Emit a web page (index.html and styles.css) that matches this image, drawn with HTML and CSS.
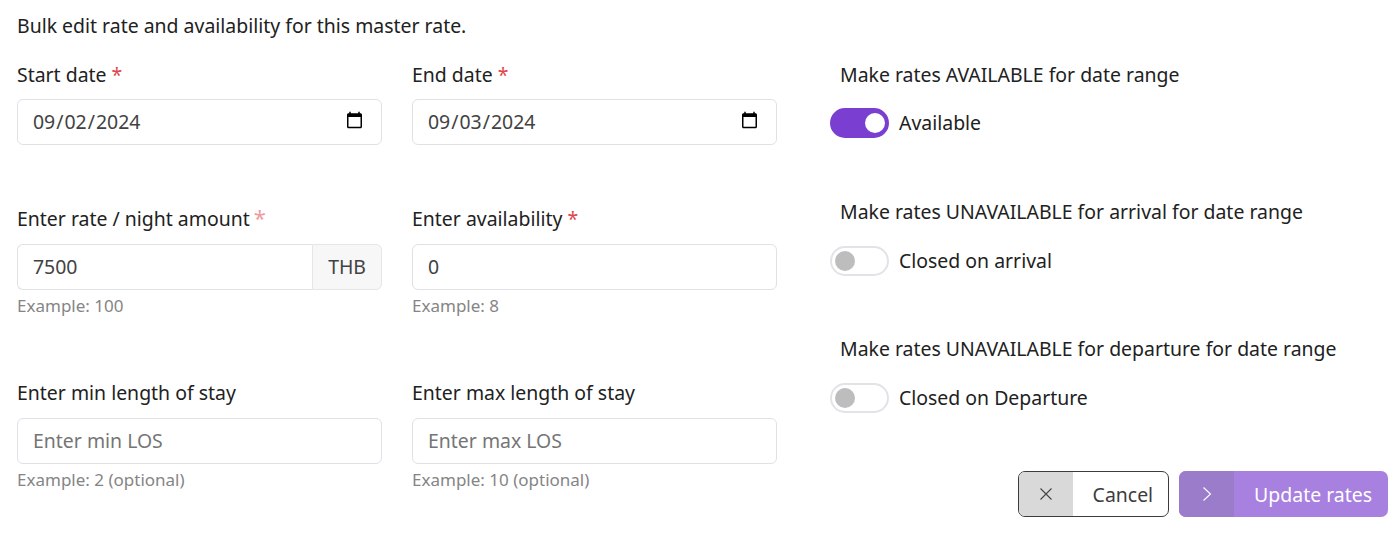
FILE: index.html
```html
<!DOCTYPE html>
<html lang="en">
<head>
    <meta charset="UTF-8">
    <title>Bulk edit rates</title>
    <link rel="stylesheet" href="styles.css">
</head>
<body>
    <p class="intro">Bulk edit rate and availability for this master rate.</p>
    <div class="form-layout">
        <div class="fields">
            <div class="field field-dates">
                <label>Start date <span class="req">*</span></label>
                <input class="control" type="date" value="2024-09-02">
            </div>
            <div class="field field-dates">
                <label>End date <span class="req">*</span></label>
                <input class="control" type="date" value="2024-09-03">
            </div>
            <div class="field field-mid">
                <label>Enter rate / night amount <span class="req req-light">*</span></label>
                <div class="input-group">
                    <input class="control" type="text" value="7500">
                    <span class="addon">THB</span>
                </div>
                <div class="hint">Example: 100</div>
            </div>
            <div class="field field-mid">
                <label>Enter availability <span class="req">*</span></label>
                <input class="control" type="text" value="0">
                <div class="hint">Example: 8</div>
            </div>
            <div class="field field-low">
                <label>Enter min length of stay</label>
                <input class="control" type="text" placeholder="Enter min LOS">
                <div class="hint">Example: 2 (optional)</div>
            </div>
            <div class="field field-low">
                <label>Enter max length of stay</label>
                <input class="control" type="text" placeholder="Enter max LOS">
                <div class="hint">Example: 10 (optional)</div>
            </div>
        </div>
        <div class="side">
            <div class="toggle-block">
                <div class="toggle-title">Make rates AVAILABLE for date range</div>
                <div class="toggle-row">
                    <span class="switch on"><span class="knob"></span></span>
                    <span>Available</span>
                </div>
            </div>
            <div class="toggle-block">
                <div class="toggle-title">Make rates UNAVAILABLE for arrival for date range</div>
                <div class="toggle-row">
                    <span class="switch"><span class="knob"></span></span>
                    <span>Closed on arrival</span>
                </div>
            </div>
            <div class="toggle-block">
                <div class="toggle-title">Make rates UNAVAILABLE for departure for date range</div>
                <div class="toggle-row">
                    <span class="switch"><span class="knob"></span></span>
                    <span>Closed on Departure</span>
                </div>
            </div>
            <div class="actions">
                <button class="btn btn-cancel">
                    <span class="btn-icon">
                        <svg width="14" height="14" viewBox="0 0 14 14"><path d="M1.5 1.5l11 11M12.5 1.5l-11 11" fill="none" stroke="#444" stroke-width="1.1"/></svg>
                    </span>
                    <span class="btn-text">Cancel</span>
                </button>
                <button class="btn btn-submit">
                    <span class="btn-icon">
                        <svg width="10" height="16" viewBox="0 0 10 16"><path d="M1.5 1.5l7 6.5-7 6.5" fill="none" stroke="#fff" stroke-width="1.1"/></svg>
                    </span>
                    <span class="btn-text">Update rates</span>
                </button>
            </div>
        </div>
    </div>
</body>
</html>
```

FILE: styles.css
```css
body {
    margin: 0;
    padding: 0 12px 0 17px;
    background: #fff;
    color: #212121;
    font-family: "Noto Sans", sans-serif;
    font-size: 19.45px;
    line-height: 28px;
}

.intro {
    margin: 0;
    padding-top: 12px;
}

.form-layout {
    display: flex;
    margin-top: 21px;
}

.fields {
    display: grid;
    grid-template-columns: 365px 365px;
    column-gap: 30px;
    align-content: start;
    width: 760px;
}

.field {
    display: flex;
    flex-direction: column;
}

.field-dates {
    height: 144px;
}

.field-mid {
    height: 174px;
}

.field label {
    margin-bottom: 10px;
    height: 28px;
}

.field-mid label,
.field-low label {
    margin-bottom: 11px;
}

.req {
    color: #e0484f;
}

.req-light {
    color: #ef9a9f;
    font-size: 22px;
    line-height: 0;
    margin-left: -1px;
}

.control {
    box-sizing: border-box;
    width: 100%;
    height: 46px;
    padding: 0 15px 2px;
    border: 1px solid #dfe1e6;
    border-radius: 6px;
    background: #fff;
    color: #424242;
    font-family: "Noto Sans", sans-serif;
    font-size: 19.45px;
}

.control[type="date"] {
    padding-left: 14px;
}

.control::placeholder {
    color: #757575;
    opacity: 1;
}

.input-group {
    display: flex;
}

.input-group .control {
    flex: 1;
    min-width: 0;
    border-right: 0;
    border-radius: 6px 0 0 6px;
}

.addon {
    display: flex;
    align-items: center;
    box-sizing: border-box;
    height: 46px;
    padding: 0 15px;
    border: 1px solid #e6e6e6;
    border-radius: 0 6px 6px 0;
    background: #f7f7f7;
    color: #424242;
}

.hint {
    margin-top: 2px;
    color: #858585;
    font-size: 17px;
    line-height: 28px;
}

.side {
    flex: 1;
    padding-left: 53px;
    display: flex;
    flex-direction: column;
}

.toggle-block {
    height: 137px;
}

.toggle-title {
    padding-left: 10px;
}

.toggle-row {
    display: flex;
    align-items: center;
    gap: 10px;
    margin-top: 19px;
    height: 30px;
}

.toggle-block + .toggle-block .toggle-row {
    margin-top: 20px;
}

.switch {
    display: flex;
    align-items: center;
    box-sizing: border-box;
    width: 59px;
    height: 30px;
    padding: 0 3px;
    border: 2px solid #e1e3e8;
    border-radius: 15px;
    background: #fff;
}

.switch .knob {
    width: 20px;
    height: 20px;
    border-radius: 50%;
    background: #bdbdbd;
}

.switch.on {
    justify-content: flex-end;
    padding-right: 2px;
    border-color: #7a3fd0;
    background: #7a3fd0;
}

.switch.on .knob {
    background: #fff;
}

.actions {
    display: flex;
    justify-content: flex-end;
    gap: 10px;
    margin-top: -1px;
}

.btn {
    display: flex;
    align-items: stretch;
    box-sizing: border-box;
    height: 46px;
    padding: 0;
    overflow: hidden;
    border-radius: 7px;
    font-family: "Noto Sans", sans-serif;
    font-size: 19.45px;
}

.btn-icon {
    display: flex;
    align-items: center;
    justify-content: center;
    width: 55px;
}

.btn-text {
    display: flex;
    align-items: center;
    padding: 0 16px 0 20px;
}

.btn-cancel {
    border: 1px solid #3c3c3c;
    background: #fff;
    color: #3c3c3c;
}

.btn-cancel .btn-text {
    padding-right: 15px;
}

.btn-cancel .btn-icon {
    width: 54px;
    background: #d9d9d9;
}

.btn-submit {
    border: 0;
    background: #a880e0;
    color: #fff;
}

.btn-submit .btn-icon {
    background: #9b7ccb;
}
```
